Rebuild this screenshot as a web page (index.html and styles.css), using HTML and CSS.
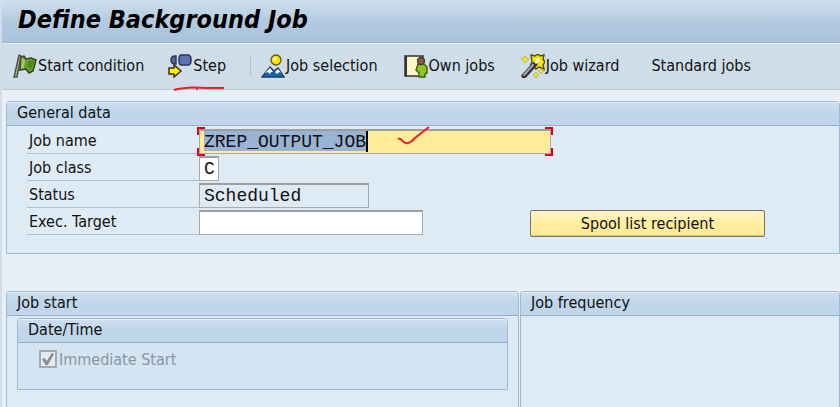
FILE: index.html
```html
<!DOCTYPE html>
<html lang="en">
<head>
  <meta charset="UTF-8" />
  <meta name="viewport" content="width=device-width, initial-scale=1.0" />
  <title>Define Background Job</title>
  <link rel="stylesheet" href="styles.css">
</head>
<body>
  <div class="window">
    <header class="title-bar">
      <h1>Define Background Job</h1>
    </header>

    <nav class="toolbar">
      <button type="button" class="tool">
        <svg class="icon" viewBox="0 0 24 24">
          <path d="M7 3L11 2 13 5 18 4 23 6 20 17 16 19 13 15 7 16Z" fill="#6b9c35" stroke="#34451f" stroke-width="1.5"/>
          <path d="M9 4L12 6 11 14 8 15Z" fill="#9dc968"/>
          <path d="M16 7L21 7 18 15 14 12Z" fill="#4c8a14"/>
          <path d="M6 1L8 2 4 23 1 23Z" fill="#aaa68a" stroke="#4a4939" stroke-width="1.3"/>
        </svg>
        <span>Start condition</span>
      </button>
      <button type="button" class="tool tool-step">
        <svg class="icon" viewBox="0 0 24 24">
          <path d="M8 2H7Q3 2 3 6T7 10H8Z" fill="#5367a0" stroke="#2b3454" stroke-width="1.4"/>
          <path d="M13 1H20Q23 1 23 6T20 11H13Q11 11 11 6T13 1Z" fill="#5b74b3" stroke="#2b3454" stroke-width="1.5"/>
          <path d="M1 14H6V11L13 17 6 23V20H1Z" fill="#fff000" stroke="#34331c" stroke-width="1.5"/>
        </svg>
        <span>Step</span>
        <svg class="underline-mark" viewBox="0 0 52 6">
          <path d="M1 4C10 1 22 1 34 2L51 2M24 2V4" fill="none" stroke="#ee1c24" stroke-width="2"/>
        </svg>
      </button>
      <span class="divider"></span>
      <button type="button" class="tool tool-selection">
        <svg class="icon" viewBox="0 0 24 24">
          <path d="M1 23L9 13 13 17 17 14 23 23Z" fill="#1e61a8" stroke="#173f68" stroke-width="1.3"/>
          <path d="M4 19L9 14 12 18 10 18 9 20 7 18ZM14 18L17 15 20 19 18 18 16 20Z" fill="#fff"/>
          <circle cx="15" cy="6" r="5" fill="#ffdc00" stroke="#635719" stroke-width="1.3"/>
          <circle cx="14" cy="5" r="2" fill="#fff29a"/>
        </svg>
        <span>Job selection</span>
      </button>
      <button type="button" class="tool tool-own">
        <svg class="icon" viewBox="0 0 24 24">
          <path d="M1 2H19V22H1Z" fill="#fff6c8" stroke="#333" stroke-width="1.5"/>
          <path d="M2 2V22" stroke="#333" stroke-width="2"/>
          <path d="M14 10H20L23 13V19L21 20V23H15V19L12 16Z" fill="#8fc51e" stroke="#405c16" stroke-width="1.4"/>
          <circle cx="17" cy="7" r="3.5" fill="#885f45" stroke="#42362c" stroke-width="1.3"/>
        </svg>
        <span>Own jobs</span>
      </button>
      <button type="button" class="tool tool-wizard">
        <svg class="icon" viewBox="0 0 24 24">
          <path d="M10 1L14 2 17 0 19 2 23 1 22 5 24 8 22 11 23 15 18 13 15 15 13 13 9 13 11 8Z" fill="#f4e600" stroke="#4f4b10" stroke-width="1.4"/>
          <path d="M3 22L14 10" stroke="#333" stroke-width="5" stroke-linecap="round"/>
          <path d="M3 21L12 11" stroke="#aaa" stroke-width="2" stroke-linecap="round"/>
          <path d="M14 9L18 5" stroke="#fff" stroke-width="3"/>
          <path d="M4 2L5 4 8 5 5 7 4 9 3 7 0 5 3 4ZM20 14L21 16 24 17 21 18 20 20 19 18 17 17 19 16ZM15 18L16 20 18 21 16 22 15 24 14 22 12 21 14 20Z" fill="#ffed22" stroke="#b5aa1d" stroke-width=".7"/>
        </svg>
        <span>Job wizard</span>
      </button>
      <button type="button" class="tool tool-standard"><span>Standard jobs</span></button>
    </nav>

    <main class="content">
      <section class="panel">
        <h2>General data</h2>
        <form class="fields">
          <div class="field">
            <label for="jobName">Job name</label>
            <div class="focus-box">
              <input type="text" id="jobName" class="job-name" value="ZREP_OUTPUT_JOB">
              <span class="corner top-left"></span>
              <span class="corner top-right"></span>
              <span class="corner bottom-left"></span>
              <span class="corner bottom-right"></span>
              <svg class="check-mark" viewBox="0 0 34 20">
                <path d="M1 13C5 11 5 17 9 17C13 18 15 15 18 12L32 1" fill="none" stroke="#ee1c24" stroke-width="2"/>
              </svg>
            </div>
          </div>
          <div class="field">
            <label for="jobClass">Job class</label>
            <input type="text" id="jobClass" class="job-class" value="C">
          </div>
          <div class="field">
            <label for="status">Status</label>
            <input type="text" id="status" class="status" value="Scheduled" readonly>
          </div>
          <div class="field">
            <label for="target">Exec. Target</label>
            <input type="text" id="target" class="target">
            <button type="button" class="spool">Spool list recipient</button>
          </div>
        </form>
      </section>

      <div class="columns">
        <section class="panel job-start">
          <h2>Job start</h2>
          <section class="panel date-time">
            <h2>Date/Time</h2>
            <div class="check-row">
              <input type="checkbox" id="immediate" checked disabled>
              <label for="immediate">Immediate Start</label>
            </div>
          </section>
        </section>
        <section class="panel job-frequency">
          <h2>Job frequency</h2>
        </section>
      </div>
    </main>
  </div>
</body>
</html>
```
FILE: styles.css
```css
* {
  box-sizing: border-box;
}
body {
  margin: 0;
  background: #e8eff7;
  color: #111;
  font-family: Tahoma, "DejaVu Sans Condensed", "DejaVu Sans", sans-serif;
  font-size: 16px;
  font-stretch: condensed;
}
button, input {
  font: inherit;
  color: inherit;
}
.window {
  display: flex;
  flex-direction: column;
  min-height: 100vh;
  border-left: 2px solid #d3dce9;
}
.title-bar {
  height: 43px;
  padding-left: 16px;
  background: linear-gradient(#d0e0ee, #b3cbe0 50%, #a9c2dc);
  border-bottom: 1px solid #9fb6cb;
}
h1 {
  margin: 0;
  font-size: 25px;
  font-style: italic;
  line-height: 40px;
  color: #000;
}
.toolbar {
  display: flex;
  align-items: center;
  height: 47px;
  padding: 0 0 2px 11px;
  background: #cfdde8;
  border-top: 1px solid #e3ecf3;
  border-bottom: 1px solid #bccbd9;
}
.tool {
  position: relative;
  display: flex;
  align-items: center;
  gap: 1px;
  padding: 0;
  border: none;
  background: none;
  line-height: 24px;
  white-space: nowrap;
}
.icon {
  width: 24px;
  height: 24px;
}
.tool-step {
  margin-left: 24px;
}
.underline-mark {
  position: absolute;
  left: 5px;
  top: 32px;
  width: 52px;
  height: 6px;
}
.divider {
  width: 1px;
  height: 20px;
  margin: 0 10px 0 24px;
  background: #b1c5d8;
}
.tool-own,
.tool-wizard {
  margin-left: 26px;
}
.tool-standard {
  margin-left: 32px;
}
.content {
  flex: 1;
  display: flex;
  flex-direction: column;
  padding: 11px 0 0 4px;
}
.panel {
  background: #deeaf4;
  border: 1px solid #9dbad3;
  border-radius: 4px 4px 0 0;
}
h2 {
  margin: 0;
  padding-left: 10px;
  height: 24px;
  border-top: 1px solid #e2edf6;
  border-bottom: 1px solid #91afcf;
  border-radius: 3px 3px 0 0;
  background: linear-gradient(#cddfee, #bfd5ea 50%, #c1d6ea);
  font-size: 16px;
  font-weight: normal;
  line-height: 20px;
}
.fields {
  display: flex;
  flex-direction: column;
  gap: 2px;
  padding: 3px 0 18px 20px;
}
.field {
  display: flex;
  align-items: flex-start;
  height: 25px;
}
.field label {
  width: 172px;
  height: 25px;
  padding-left: 2px;
  border-bottom: 1px solid #b4bec7;
  line-height: 24px;
}
.field input {
  height: 25px;
  padding: 0 4px;
  border: 1px solid #a5adb3;
  border-top: 2px solid #9b9fa3;
  border-radius: 0;
  background: #fff;
  font-family: "Courier New", "Liberation Mono", monospace;
  font-size: 18px;
  outline: none;
}
.focus-box {
  position: relative;
  width: 352px;
}
/* selected text followed by the cursor */
.field .job-name {
  display: block;
  width: 100%;
  background:
    linear-gradient(#000, #000) calc(15ch + 4px) 0 / 2px 21px no-repeat,
    linear-gradient(#9ab3d3, #9ab3d3) 4px 0 / 15ch 20px no-repeat,
    #ffec9b;
}
.corner {
  position: absolute;
  width: 8px;
  height: 8px;
  border: 0 solid #e2001a;
}
.top-left {
  left: -2px;
  top: -2px;
  border-width: 2px 0 0 2px;
}
.top-right {
  right: -2px;
  top: -2px;
  border-width: 2px 2px 0 0;
}
.bottom-left {
  left: -2px;
  bottom: -2px;
  border-width: 0 0 2px 2px;
}
.bottom-right {
  right: -2px;
  bottom: -2px;
  border-width: 0 2px 2px 0;
}
.check-mark {
  position: absolute;
  left: 198px;
  top: -3px;
  width: 34px;
  height: 20px;
}
.field .job-class {
  width: 20px;
}
.field .status {
  width: 170px;
  background: #deeaf4;
}
.field .target {
  width: 224px;
}
.spool {
  width: 235px;
  height: 27px;
  margin-left: 107px;
  padding: 0;
  border: 1px solid #77746a;
  border-radius: 2px;
  background: linear-gradient(#fff7cd, #ffeda3 45%, #ffe992);
  box-shadow: inset 0 -1px #d9c579;
  line-height: 24px;
}
.columns {
  flex: 1;
  display: grid;
  grid-template-columns: 513fr 320fr;
  gap: 1px;
  margin-top: 37px;
}
.columns > .panel {
  border-bottom: none;
}
.date-time {
  margin: 2px 10px 0;
  background: #d3e4f3;
}
.check-row {
  display: flex;
  align-items: center;
  gap: 2px;
  height: 46px;
  padding: 0 0 14px 21px;
  color: #8b969f;
}
.check-row input {
  display: flex;
  align-items: center;
  justify-content: center;
  appearance: none;
  width: 18px;
  height: 18px;
  margin: 0;
  border: 2px solid #a3a9ae;
  border-radius: 1px;
  background: #e3ebf1;
}
.check-row input::after {
  content: "";
  width: 12px;
  height: 12px;
  background: #858d94;
  clip-path: polygon(0 50%, 20% 42%, 40% 66%, 82% 0, 100% 8%, 48% 100%, 30% 100%);
}
```
